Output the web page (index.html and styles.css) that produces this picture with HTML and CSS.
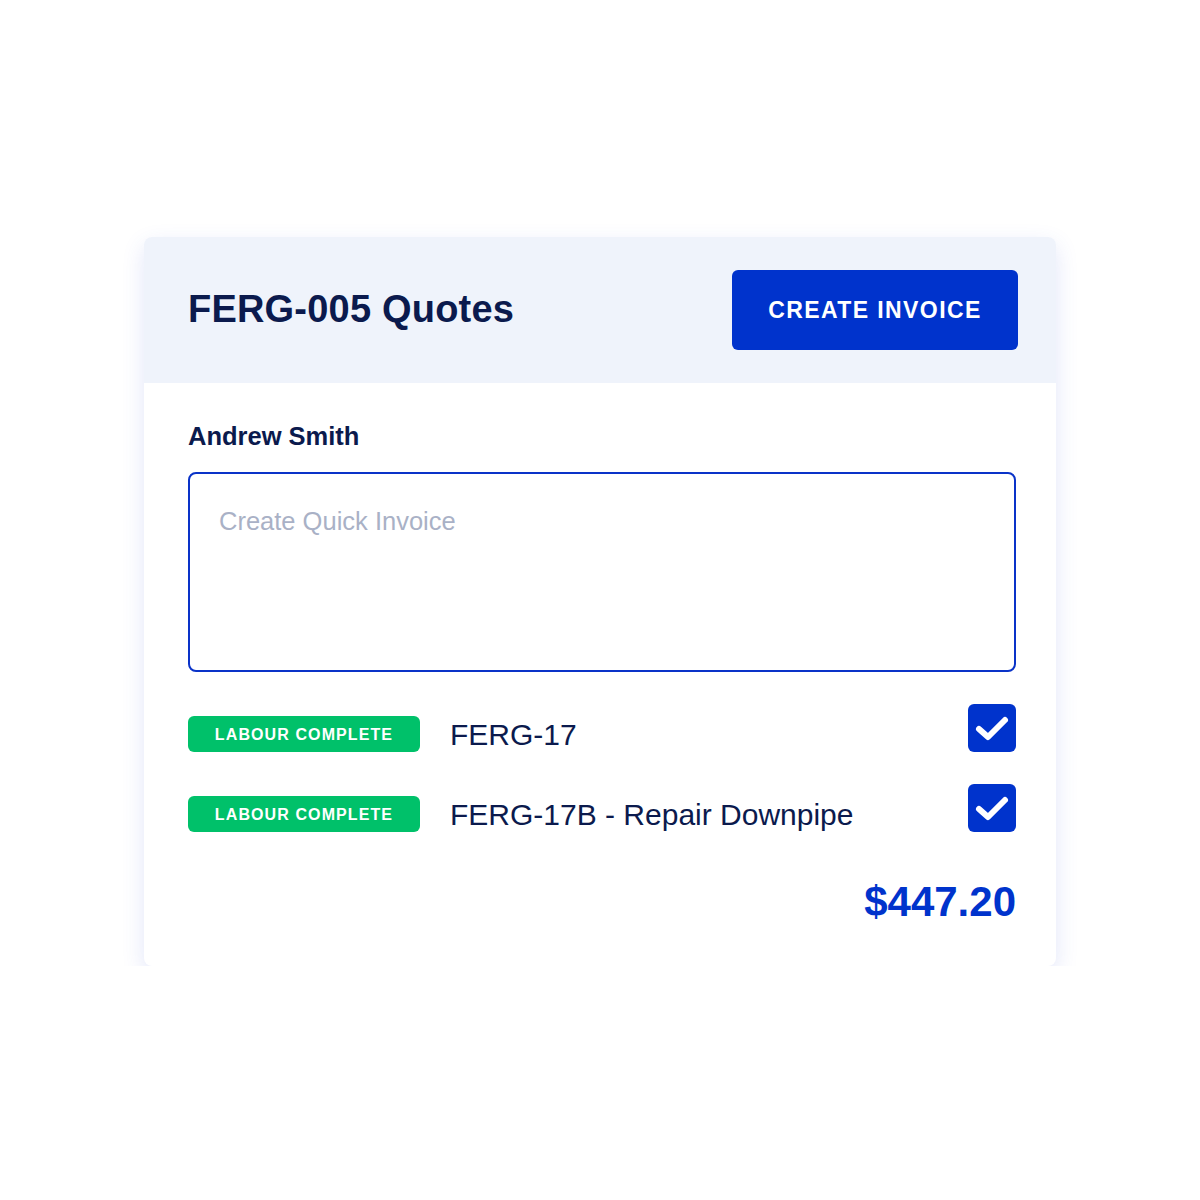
FILE: index.html
```html
<!DOCTYPE html>
<html lang="en">
<head>
<meta charset="utf-8">
<title>FERG-005 Quotes</title>
<link rel="stylesheet" href="styles.css">
</head>
<body>
<main class="page">
  <section class="card">
    <header class="card-header">
      <h1 class="title">FERG-005 Quotes</h1>
      <button class="btn-primary" type="button">CREATE INVOICE</button>
    </header>
    <div class="card-body">
      <div class="customer">Andrew Smith</div>
      <textarea class="quick-input" placeholder="Create Quick Invoice"></textarea>
      <ul class="jobs">
        <li class="job">
          <span class="badge">LABOUR COMPLETE</span>
          <span class="job-name">FERG-17</span>
          <span class="check" aria-label="selected">
            <svg viewBox="0 0 48 48" width="48" height="48"><path d="M11 25 L20 33 L37 16" fill="none" stroke="#fff" stroke-width="6" stroke-linecap="round" stroke-linejoin="round"/></svg>
          </span>
        </li>
        <li class="job">
          <span class="badge">LABOUR COMPLETE</span>
          <span class="job-name">FERG-17B - Repair Downpipe</span>
          <span class="check" aria-label="selected">
            <svg viewBox="0 0 48 48" width="48" height="48"><path d="M11 25 L20 33 L37 16" fill="none" stroke="#fff" stroke-width="6" stroke-linecap="round" stroke-linejoin="round"/></svg>
          </span>
        </li>
      </ul>
      <div class="total">$447.20</div>
    </div>
  </section>
</main>
</body>
</html>
```
FILE: styles.css
```css
* { box-sizing: border-box; }
html, body { margin: 0; padding: 0; background: #ffffff; }
body { font-family: "Liberation Sans", Arial, sans-serif; color: #0b1a4d; }

.page {
  display: flex;
  justify-content: center;
  padding-top: 237px;
}

.card {
  width: 912px;
  background: #ffffff;
  border-radius: 8px;
  overflow: hidden;
  box-shadow: 0 8px 22px rgba(60, 90, 215, 0.15);
}

.card-header {
  height: 146px;
  background: #eff3fb;
  display: flex;
  align-items: center;
  justify-content: space-between;
  padding: 0 38px 0 44px;
}

.title {
  margin: 0;
  font-size: 38px;
  font-weight: 700;
  color: #0b1a4d;
  letter-spacing: 0.2px;
  margin-top: -1px;
}

.btn-primary {
  width: 286px;
  height: 80px;
  border: 0;
  border-radius: 6px;
  background: #0033cc;
  color: #ffffff;
  font-family: inherit;
  font-size: 23px;
  font-weight: 700;
  letter-spacing: 1.4px;
  padding: 0;
}

.card-body {
  padding: 38px 40px 40px 44px;
  display: flex;
  flex-direction: column;
}

.customer {
  font-size: 25.5px;
  font-weight: 700;
  line-height: 31px;
  color: #0b1a4d;
}

.quick-input {
  margin-top: 20px;
  width: 828px;
  height: 200px;
  border: 2px solid #0a33c8;
  border-radius: 8px;
  padding: 33px 29px 20px;
  resize: none;
  font-family: inherit;
  font-size: 25.5px;
  color: #0b1a4d;
  background: #fff;
  outline: none;
}
.quick-input::placeholder { color: #a9b1c6; }

.jobs {
  list-style: none;
  margin: 32px 0 0;
  padding: 0;
  display: flex;
  flex-direction: column;
  gap: 32px;
}

.job {
  display: flex;
  align-items: flex-end;
  height: 48px;
}

.badge {
  width: 232px;
  height: 36px;
  border-radius: 6px;
  background: #00c16a;
  color: #fff;
  font-size: 16px;
  font-weight: 700;
  letter-spacing: 1.1px;
  display: flex;
  align-items: center;
  justify-content: center;
  padding-top: 1px;
}

.job-name {
  margin-left: 30px;
  font-size: 30px;
  line-height: 36px;
  color: #0b1a4d;
  flex: 1;
  position: relative;
  top: 1px;
}

.check {
  width: 48px;
  height: 48px;
  border-radius: 6px;
  background: #0033cc;
  display: flex;
  align-self: flex-start;
}

.total {
  margin-top: 46px;
  align-self: flex-end;
  font-size: 42px;
  line-height: 48px;
  font-weight: 700;
  color: #0033cc;
}
```
